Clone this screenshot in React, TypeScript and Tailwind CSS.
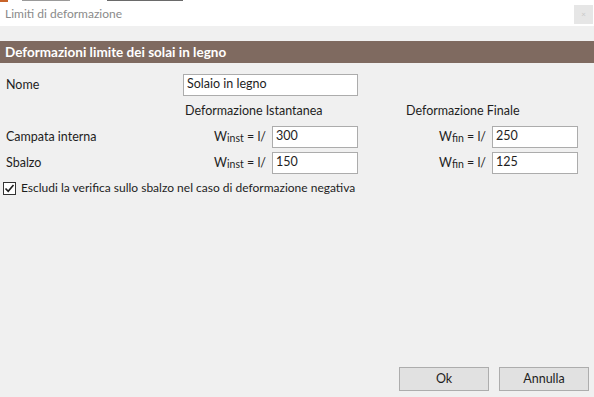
import React from 'react';

const font = { fontFamily: 'Lato, "Noto Sans", sans-serif' };

function Field({ value, className }: { value: string; className: string }) {
  return (
    <input
      readOnly
      value={value}
      className={`h-[22px] border border-[#acacac] bg-white px-[3px] pb-[3px] text-[12.5px] text-[#1e1e1e] outline-none ${className}`}
    />
  );
}

function WLabel({ sub }: { sub: string }) {
  return (
    <span className="text-[12.5px] text-[#1e1e1e]">
      W<span className="relative top-[1px] text-[10.5px]">{sub}</span> = l/
    </span>
  );
}

export default function App() {
  return (
    <div className="relative h-[397px] w-[594px] overflow-hidden bg-[#f0f0f0] text-[#1e1e1e]" style={font}>
      {/* window behind, only its lower edge shows */}
      <div className="flex h-[2px] items-start bg-white">
        <div className="h-[2px] w-[8px] bg-[#c8642a]" />
        <div className="ml-[14px] h-[1px] w-[48px] bg-[#9a9a9a]" />
        <div className="ml-[37px] h-[1px] w-[76px] bg-[#6a6a6a]" />
      </div>

      {/* title bar */}
      <div className="flex h-[24px] items-center justify-between bg-white pl-[5px] pr-[1px]">
        <span className="text-[12px] text-[#8a8a8a]">Limiti di deformazione</span>
        <div className="flex h-[19px] w-[19px] items-center justify-center bg-[#e6e6e6] text-[8px] text-[#c8c8c8]">
          ×
        </div>
      </div>

      <div className="h-[15px]" />

      {/* section header */}
      <div className="flex h-[22px] items-center bg-[#7f6a60] pl-[5px]">
        <span className="text-[13.5px] font-bold text-white">Deformazioni limite dei solai in legno</span>
      </div>

      {/* form */}
      <div className="text-[12px]">
        <div className="mt-[11px] flex h-[22px] items-center">
          <span className="w-[183px] pl-[6px] text-[12.5px]">Nome</span>
          <Field value="Solaio in legno" className="w-[175px]" />
        </div>

        <div className="mt-[5px] flex h-[20px] items-center text-[12.5px]">
          <span className="ml-[185px] w-[221px]">Deformazione Istantanea</span>
          <span>Deformazione Finale</span>
        </div>

        <div className="mt-[5px] flex h-[22px] items-center">
          <span className="w-[183px] pl-[6px] text-[12.5px]">Campata interna</span>
          <div className="flex w-[89px] justify-end pr-[6px]">
            <WLabel sub="inst" />
          </div>
          <Field value="300" className="w-[86px]" />
          <div className="flex w-[134px] justify-end pr-[6px]">
            <WLabel sub="fin" />
          </div>
          <Field value="250" className="w-[86px]" />
        </div>

        <div className="mt-[4px] flex h-[22px] items-center">
          <span className="w-[183px] pl-[6px] text-[12.5px]">Sbalzo</span>
          <div className="flex w-[89px] justify-end pr-[6px]">
            <WLabel sub="inst" />
          </div>
          <Field value="150" className="w-[86px]" />
          <div className="flex w-[134px] justify-end pr-[6px]">
            <WLabel sub="fin" />
          </div>
          <Field value="125" className="w-[86px]" />
        </div>

        <div className="mt-[5px] flex items-center pl-[3px]">
          <div className="flex h-[13px] w-[13px] items-center justify-center border border-[#333] bg-white">
            <svg width="11" height="11" viewBox="0 0 11 11">
              <path d="M1.5 5.5 L4.2 8.3 L9.5 2" fill="none" stroke="#1e1e1e" strokeWidth="1.6" />
            </svg>
          </div>
          <span className="ml-[5px]">Escludi la verifica sullo sbalzo nel caso di deformazione negativa</span>
        </div>
      </div>

      {/* buttons */}
      <div className="absolute bottom-[6px] right-[5px] flex gap-[10px]">
        <button className="h-[24px] w-[90px] border border-[#adadad] bg-[#e1e1e1] text-[12.5px] text-[#1e1e1e]">
          Ok
        </button>
        <button className="h-[24px] w-[90px] border border-[#adadad] bg-[#e1e1e1] text-[12.5px] text-[#1e1e1e]">
          Annulla
        </button>
      </div>
    </div>
  );
}
